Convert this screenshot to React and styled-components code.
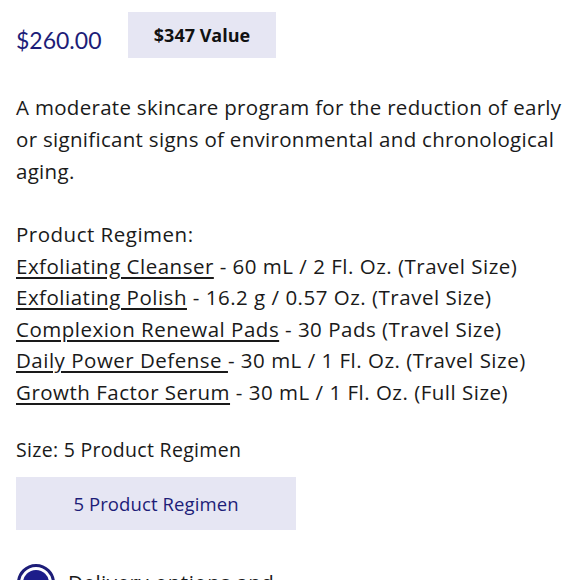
import React from "react";
import styled, { createGlobalStyle } from "styled-components";

const GlobalStyle = createGlobalStyle`
  body {
    margin: 0;
    background: #ffffff;
    font-family: "Open Sans", Lato, sans-serif;
    color: #1a1a1a;
  }
`;

const products = [
  { name: "Exfoliating Cleanser", detail: " - 60 mL / 2 Fl. Oz. (Travel Size)" },
  { name: "Exfoliating Polish", detail: " - 16.2 g / 0.57 Oz. (Travel Size)" },
  { name: "Complexion Renewal Pads", detail: " - 30 Pads (Travel Size)" },
  { name: "Daily Power Defense ", detail: "- 30 mL / 1 Fl. Oz. (Travel Size)" },
  { name: "Growth Factor Serum", detail: " - 30 mL / 1 Fl. Oz. (Full Size)" },
];

export default function App() {
  return (
    <>
      <GlobalStyle />
      <Page>
        <PriceRow>
          <Price>$260.00</Price>
          <ValueBadge>$347 Value</ValueBadge>
        </PriceRow>
        <Description>
          A moderate skincare program for the reduction of early or significant
          signs of environmental and chronological aging.
        </Description>
        <Regimen>
          <div>Product Regimen:</div>
          {products.map((p) => (
            <div key={p.name}>
              <ProductLink>{p.name}</ProductLink>
              {p.detail}
            </div>
          ))}
        </Regimen>
        <SizeLabel>Size: 5 Product Regimen</SizeLabel>
        <SizeButton>5 Product Regimen</SizeButton>
        <OptionRow>
          <Radio />
          <OptionText>Delivery options and</OptionText>
        </OptionRow>
      </Page>
    </>
  );
}

const Page = styled.div`
  padding: 12px 16px 0;
  height: 580px;
  box-sizing: border-box;
  overflow: hidden;
  font-size: 20.5px;
  letter-spacing: 0.5px;
`;

const PriceRow = styled.div`
  display: flex;
  align-items: center;
  gap: 24px;
  letter-spacing: 0;
`;

const Price = styled.div`
  width: 88px;
  font-family: Lato, sans-serif;
  font-size: 23px;
  color: #1d1d78;
  padding-top: 9px;
  white-space: nowrap;
`;

const ValueBadge = styled.div`
  width: 148px;
  height: 46px;
  display: flex;
  align-items: center;
  justify-content: center;
  background: #e6e6f3;
  font-size: 18px;
  font-weight: 700;
  color: #111111;
`;

const Description = styled.p`
  margin: 33px 0 0;
  line-height: 32px;
  width: 562px;
  letter-spacing: 0.3px;
`;

const Regimen = styled.div`
  margin-top: 32px;
  line-height: 31.6px;
`;

const ProductLink = styled.span`
  text-decoration: underline;
  text-underline-offset: 3px;
  text-decoration-thickness: 1.5px;
`;

const SizeLabel = styled.div`
  margin-top: 26px;
  font-size: 19.5px;
  line-height: 30px;
  letter-spacing: 0.3px;
`;

const SizeButton = styled.div`
  margin-top: 12px;
  width: 280px;
  height: 53px;
  display: flex;
  align-items: center;
  justify-content: center;
  background: #e6e6f3;
  color: #1d1d78;
  font-size: 18.5px;
  letter-spacing: 0.1px;
`;

const OptionRow = styled.div`
  margin-top: 34px;
  display: flex;
  align-items: flex-start;
  gap: 13px;
  padding-left: 1px;
`;

const Radio = styled.div`
  width: 38px;
  height: 38px;
  box-sizing: border-box;
  border-radius: 50%;
  border: 3px solid #1d1d78;
  padding: 3px;
  background: #ffffff;
  &::after {
    content: "";
    display: block;
    width: 100%;
    height: 100%;
    border-radius: 50%;
    background: #1d1d8a;
  }
`;

const OptionText = styled.div`
  line-height: 28px;
  margin-top: 4px;
`;
